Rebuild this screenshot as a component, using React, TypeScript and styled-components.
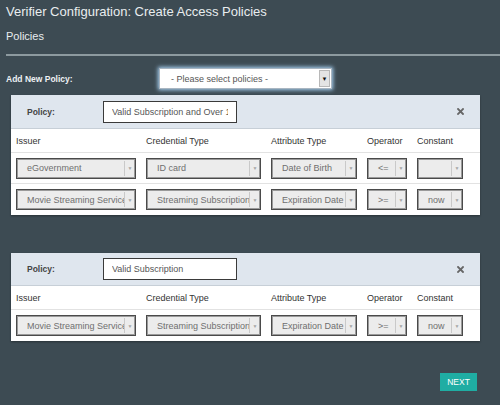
import React from 'react';
import styled, { createGlobalStyle } from 'styled-components';

const GlobalStyle = createGlobalStyle`
  html, body {
    margin: 0;
    padding: 0;
    background: #3d4b53;
  }
  body {
    font-family: "Liberation Sans", Arial, sans-serif;
  }
`;

const Page = styled.div`
  width: 500px;
  height: 405px;
  padding: 4px 0 0 6px;
  box-sizing: border-box;
  background: #3d4b53;
  overflow: hidden;
`;

const Title = styled.h1`
  margin: 0;
  font-size: 13px;
  line-height: 16px;
  font-weight: normal;
  color: #e9edef;
`;

const SubTitle = styled.h2`
  margin: 9px 0 0 0;
  font-size: 11px;
  line-height: 14px;
  font-weight: normal;
  color: #e9edef;
`;

const Rule = styled.div`
  margin-top: 11px;
  height: 2px;
  background: #8d9a9f;
`;

const AddRow = styled.div`
  display: flex;
  align-items: center;
  height: 21px;
  margin-top: 12px;
`;

const AddLabel = styled.span`
  width: 153px;
  font-size: 8.5px;
  font-weight: bold;
  color: #eef1f3;
`;

const PolicySelect = styled.div`
  width: 173px;
  height: 21px;
  box-sizing: border-box;
  display: flex;
  align-items: stretch;
  background: #fff;
  border: 1px solid #a9b6c2;
  box-shadow: 0 0 4px 1px #a9d3f5;
`;

const PolicySelectText = styled.span`
  flex: 1;
  display: flex;
  align-items: center;
  padding-left: 11px;
  font-size: 9px;
  color: #555;
`;

const PolicySelectArrow = styled.span`
  width: 9px;
  margin: 1px;
  display: flex;
  align-items: center;
  justify-content: center;
  background: #e4e4e4;
  border: 1px solid #b8b8b8;
  font-size: 6px;
  color: #111;
`;

const Panel = styled.div<{ $gap: number }>`
  width: 469px;
  margin: ${(p) => p.$gap}px 0 0 5px;
  background: #fff;
  box-shadow: 0 1px 2px rgba(0, 0, 0, 0.35);
`;

const PanelHeader = styled.div<{ $h: number }>`
  height: ${(p) => p.$h}px;
  display: flex;
  align-items: center;
  padding: 0 16px 0 16px;
  background: #dfe6ee;
  border-bottom: 1px solid #c7cfd7;
  box-sizing: border-box;
`;

const PolicyLabel = styled.span`
  width: 76px;
  font-size: 8.5px;
  font-weight: bold;
  color: #444;
`;

const PolicyInput = styled.input`
  width: 134px;
  height: 22px;
  box-sizing: border-box;
  padding: 0 8px;
  border: 1px solid #3a3a3a;
  background: #fff;
  font-family: "Liberation Sans", Arial, sans-serif;
  font-size: 9px;
  color: #555;
  outline: none;
`;

const CloseButton = styled.span`
  margin-left: auto;
  display: flex;
`;

const Grid = styled.div`
  display: grid;
  grid-template-columns: 120px 115px 86px 40px 46px;
  column-gap: 10px;
  align-items: center;
  padding: 0 5px;
`;

const HeadRow = styled(Grid)`
  height: 23px;
  border-bottom: 1px solid #e2e2e2;
  font-size: 9px;
  color: #333;
`;

const BodyRow = styled(Grid)<{ $last?: boolean }>`
  height: 31px;
  box-sizing: border-box;
  border-bottom: ${(p) => (p.$last ? 'none' : '1px solid #e2e2e2')};
`;

const FakeSelect = styled.div`
  height: 21px;
  box-sizing: border-box;
  display: flex;
  align-items: stretch;
  background: #ececec;
  border: 1px solid #4a4a4a;
  box-shadow: inset 0 0 0 1px #9a9a9a;
  overflow: hidden;
`;

const SelectText = styled.span`
  flex: 1;
  min-width: 0;
  display: flex;
  align-items: center;
  padding-left: 10px;
  font-size: 9px;
  color: #6f6f6f;
  white-space: nowrap;
  overflow: hidden;
`;

const SelectArrow = styled.span`
  width: 10px;
  flex: none;
  display: flex;
  align-items: center;
  justify-content: center;
  border-left: 1px solid #c9c9c9;
  margin: 2px 0;
  font-size: 5px;
  color: #a5a5a5;
`;

const Footer = styled.div`
  display: flex;
  justify-content: flex-end;
  padding-right: 23px;
  margin-top: 32px;
`;

const NextButton = styled.button`
  width: 37px;
  height: 18px;
  padding: 0;
  border: none;
  background: #1fada3;
  color: #fff;
  font-family: "Liberation Sans", Arial, sans-serif;
  font-size: 8.5px;
  cursor: pointer;
`;

type Rule = [string, string, string, string, string];

type Policy = {
  name: string;
  rules: Rule[];
};

const policies: Policy[] = [
  {
    name: 'Valid Subscription and Over 12',
    rules: [
      ['eGovernment', 'ID card', 'Date of Birth', '<=', ''],
      ['Movie Streaming Service', 'Streaming Subscription', 'Expiration Date', '>=', 'now'],
    ],
  },
  {
    name: 'Valid Subscription',
    rules: [['Movie Streaming Service', 'Streaming Subscription', 'Expiration Date', '>=', 'now']],
  },
];

const columns = ['Issuer', 'Credential Type', 'Attribute Type', 'Operator', 'Constant'];

const Select = ({ value }: { value: string }) => (
  <FakeSelect>
    <SelectText>{value}</SelectText>
    <SelectArrow>▼</SelectArrow>
  </FakeSelect>
);

const CloseIcon = () => (
  <svg width="7" height="7" viewBox="0 0 7 7">
    <path d="M1 1 L6 6 M6 1 L1 6" stroke="#666" strokeWidth="1.8" strokeLinecap="square" />
  </svg>
);

const PolicyPanel = ({ policy, gap, headerHeight }: { policy: Policy; gap: number; headerHeight: number }) => (
  <Panel $gap={gap}>
    <PanelHeader $h={headerHeight}>
      <PolicyLabel>Policy:</PolicyLabel>
      <PolicyInput defaultValue={policy.name} />
      <CloseButton>
        <CloseIcon />
      </CloseButton>
    </PanelHeader>
    <HeadRow>
      {columns.map((c) => (
        <span key={c}>{c}</span>
      ))}
    </HeadRow>
    {policy.rules.map((rule, i) => (
      <BodyRow key={i} $last={i === policy.rules.length - 1}>
        {rule.map((v, j) => (
          <Select key={j} value={v} />
        ))}
      </BodyRow>
    ))}
  </Panel>
);

export default function App() {
  return (
    <>
      <GlobalStyle />
      <Page>
        <Title>Verifier Configuration: Create Access Policies</Title>
        <SubTitle>Policies</SubTitle>
        <Rule />
        <AddRow>
          <AddLabel>Add New Policy:</AddLabel>
          <PolicySelect>
            <PolicySelectText>- Please select policies -</PolicySelectText>
            <PolicySelectArrow>▼</PolicySelectArrow>
          </PolicySelect>
        </AddRow>
        <PolicyPanel policy={policies[0]} gap={6} headerHeight={34} />
        <PolicyPanel policy={policies[1]} gap={38} headerHeight={33} />
        <Footer>
          <NextButton>NEXT</NextButton>
        </Footer>
      </Page>
    </>
  );
}
